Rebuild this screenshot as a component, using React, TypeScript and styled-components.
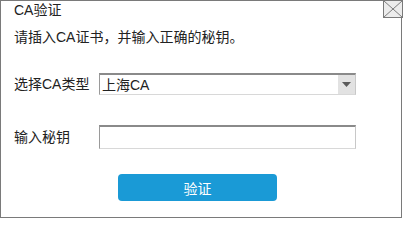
import React from "react";
import styled, {createGlobalStyle} from "styled-components";

const GlobalStyle = createGlobalStyle`
  html, body {
    margin: 0;
    padding: 0;
    background: #ffffff;
  }
  body {
    font-family: "Liberation Sans", "Noto Sans CJK SC", sans-serif;
    font-size: 14px;
    color: #222222;
  }
`

const DialogStyle = styled.div`
  position: relative;
  box-sizing: border-box;
  width: 402px;
  height: 218px;
  border: 1px solid #7a7a7a;
  background: #ffffff;
`

const TitleStyle = styled.div`
  height: 20px;
  line-height: 20px;
  padding-left: 13px;
  margin-top: -1px;
`

const MessageStyle = styled.div`
  height: 20px;
  line-height: 20px;
  padding-left: 13px;
  margin-top: 7px;
`

const FormStyle = styled.div`
  display: flex;
  flex-direction: column;
  padding-left: 13px;
`

const RowStyle = styled.div<{ $top: number }>`
  display: flex;
  align-items: center;
  margin-top: ${p => p.$top}px;
`

const LabelStyle = styled.label`
  width: 85px;
  line-height: 20px;
  white-space: nowrap;
`

const FieldBox = styled.div<{ $height: number }>`
  box-sizing: border-box;
  display: flex;
  align-items: center;
  width: 257px;
  height: ${p => p.$height}px;
  border-top: 2px solid #8a8a8a;
  border-left: 1px solid #9a9a9a;
  border-right: 1px solid #c8c8c8;
  border-bottom: 1px solid #d8d8d8;
  background: #ffffff;
`

const SelectText = styled.span`
  flex: 1;
  padding-left: 2px;
  line-height: 18px;
`

const ArrowCell = styled.span`
  align-self: stretch;
  width: 17px;
  display: flex;
  align-items: center;
  justify-content: center;
  background-color: #e2e2e2;
  background-image: radial-gradient(#cfcfcf 0.6px, transparent 0.7px);
  background-size: 2px 2px;
`

const ButtonRow = styled.div`
  display: flex;
  justify-content: flex-start;
  padding-left: 117px;
  margin-top: 25px;
`

const ButtonStyle = styled.button`
  width: 159px;
  height: 27px;
  border: none;
  border-radius: 4px;
  background: #1a9ad6;
  color: #ffffff;
  font-family: "Liberation Sans", "Noto Sans CJK SC", sans-serif;
  font-size: 14px;
  padding: 0;
  cursor: pointer;
`

const CloseStyle = styled.div`
  position: absolute;
  top: -1px;
  right: -2px;
  width: 20px;
  height: 18px;
  box-sizing: border-box;
  border: 1px solid #7a7a7a;
  background-color: #ececec;
  background-image: radial-gradient(#d4d4d4 0.6px, transparent 0.7px);
  background-size: 2px 2px;
`

const CloseIcon = () => (
    <svg width="18" height="16" viewBox="0 0 18 16" style={{display: "block"}}>
        <path d="M0 0 L18 16 M18 0 L0 16" stroke="#7d7d7d" strokeWidth="1" fill="none"/>
    </svg>
)

const Arrow = () => (
    <svg width="9" height="5" viewBox="0 0 9 5">
        <path d="M0 0 H9 L4.5 5 Z" fill="#5a5a5a"/>
    </svg>
)

export default function App() {
    return (
        <>
            <GlobalStyle/>
            <DialogStyle>
                <TitleStyle>CA验证</TitleStyle>
                <MessageStyle>请插入CA证书，并输入正确的秘钥。</MessageStyle>
                <FormStyle>
                    <RowStyle $top={26}>
                        <LabelStyle>选择CA类型</LabelStyle>
                        <FieldBox $height={22}>
                            <SelectText>上海CA</SelectText>
                            <ArrowCell><Arrow/></ArrowCell>
                        </FieldBox>
                    </RowStyle>
                    <RowStyle $top={30}>
                        <LabelStyle>输入秘钥</LabelStyle>
                        <FieldBox $height={24}/>
                    </RowStyle>
                </FormStyle>
                <ButtonRow>
                    <ButtonStyle>验证</ButtonStyle>
                </ButtonRow>
                <CloseStyle><CloseIcon/></CloseStyle>
            </DialogStyle>
        </>
    );
}
